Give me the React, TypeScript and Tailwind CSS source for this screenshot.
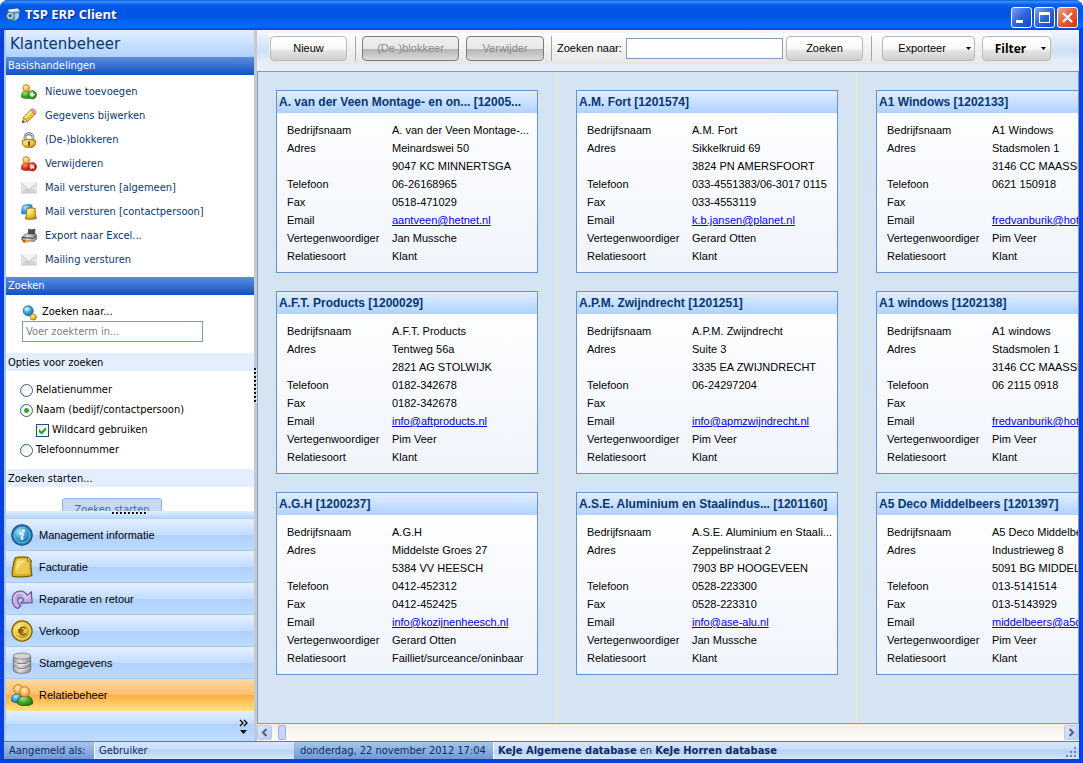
import React from 'react';

type IconProps = { className?: string };

const tahoma = "font-['DejaVu_Sans_Condensed','DejaVu_Sans',sans-serif]";
const sans = "font-['Liberation_Sans',Arial,sans-serif]";

/* ---------- icons ---------- */

const Defs = () => (
  <svg width="0" height="0" className="absolute" aria-hidden="true">
    <defs>
      <radialGradient id="gold" cx="0.35" cy="0.3" r="0.8">
        <stop offset="0" stopColor="#fff0a0" />
        <stop offset="0.5" stopColor="#eec93c" />
        <stop offset="1" stopColor="#b08412" />
      </radialGradient>
      <radialGradient id="blue" cx="0.35" cy="0.3" r="0.8">
        <stop offset="0" stopColor="#b3e2fa" />
        <stop offset="0.5" stopColor="#3fa5dc" />
        <stop offset="1" stopColor="#14659f" />
      </radialGradient>
      <radialGradient id="green" cx="0.35" cy="0.3" r="0.8">
        <stop offset="0" stopColor="#a4e080" />
        <stop offset="0.5" stopColor="#44a62c" />
        <stop offset="1" stopColor="#1d7412" />
      </radialGradient>
      <radialGradient id="red" cx="0.35" cy="0.3" r="0.8">
        <stop offset="0" stopColor="#ff8c74" />
        <stop offset="0.5" stopColor="#dc3422" />
        <stop offset="1" stopColor="#9c1509" />
      </radialGradient>
      <radialGradient id="skin" cx="0.4" cy="0.35" r="0.75">
        <stop offset="0" stopColor="#fff0b8" />
        <stop offset="0.55" stopColor="#f7bd5c" />
        <stop offset="1" stopColor="#d8801c" />
      </radialGradient>
      <linearGradient id="steel" x1="0" x2="1" y1="0" y2="0">
        <stop offset="0" stopColor="#98989c" />
        <stop offset="0.4" stopColor="#dedee0" />
        <stop offset="1" stopColor="#858589" />
      </linearGradient>
      <linearGradient id="violet" x1="0" x2="1" y1="0" y2="1">
        <stop offset="0" stopColor="#9c84c4" />
        <stop offset="0.5" stopColor="#cdbbe6" />
        <stop offset="1" stopColor="#a58acb" />
      </linearGradient>
    </defs>
  </svg>
);

const Svg16 = ({ children, className = '' }: { children: React.ReactNode; className?: string }) => (
  <svg viewBox="0 0 16 16" className={`size-4 shrink-0 ${className}`} aria-hidden="true">{children}</svg>
);
const Svg22 = ({ children }: { children: React.ReactNode }) => (
  <svg viewBox="0 0 22 22" className="size-[22px] shrink-0" aria-hidden="true">{children}</svg>
);

const UserAddIcon = () => (
  <Svg16>
    <path d="M.3 13C0 9 2 6.800 5.400 6.700S11 8.800 10.800 13.300C7.500 15.200 3 15 .3 13z" fill="url(#green)" stroke="#2d7d1c" strokeWidth=".6" />
    <circle cx="5.200" cy="4" r="3.400" fill="url(#skin)" stroke="#cf7f1e" strokeWidth=".8" />
    <circle cx="11.300" cy="10.800" r="4.200" fill="url(#green)" stroke="#1e7a18" strokeWidth=".7" />
    <path d="M11.300 8.600v4.400M9.100 10.800h4.400" stroke="#fff" strokeWidth="1.400" />
  </Svg16>
);
const UserRemoveIcon = () => (
  <Svg16>
    <path d="M.3 13C0 9 2 6.800 5.400 6.700S11 8.800 10.800 13.300C7.500 15.200 3 15 .3 13z" fill="url(#red)" stroke="#a02010" strokeWidth=".6" />
    <circle cx="5.200" cy="4" r="3.400" fill="url(#skin)" stroke="#cf7f1e" strokeWidth=".8" />
    <circle cx="11.300" cy="10.800" r="4.200" fill="url(#red)" stroke="#a01c10" strokeWidth=".7" />
    <path d="M9.700 9.200l3.200 3.200M12.900 9.200l-3.200 3.200" stroke="#fff" strokeWidth="1.500" />
  </Svg16>
);
const PencilIcon = () => (
  <Svg16>
    <path d="M1.400 14.600L2.500 9.500l4.200 4z" fill="#f3dcb0" stroke="#8b6214" strokeWidth=".6" />
    <path d="M1.100 14.900l.7-2.700 2 1.900z" fill="#333" />
    <path d="M2.300 9.600L9.600 2l4.600 4.200-7.500 7.500z" fill="#f0c030" stroke="#94690c" strokeWidth=".8" />
    <path d="M3.800 10.200L10.600 3.300" stroke="#fff2a4" strokeWidth="1.800" />
    <path d="M9.600 2l1.200-1c1.400-1 5 2.200 4.200 3.800l-.8 1.400z" fill="#e3a0cd" stroke="#8f5a7c" strokeWidth=".6" />
  </Svg16>
);
const LockIcon = () => (
  <Svg16>
    <path d="M4 8V5.500c0-5 8-5 8 0V8" fill="none" stroke="#77777a" strokeWidth="2.800" />
    <path d="M4 8V5.500c0-5 8-5 8 0V8" fill="none" stroke="#d4d4d8" strokeWidth="1.200" />
    <path d="M1.200 8.800C4 7 12 7 14.800 8.800c.2 5.200-2.300 6.800-6.800 6.800S1 14 1.200 8.800z" fill="url(#gold)" stroke="#8f6408" strokeWidth=".8" />
    <path d="M8 9.300a1.300 1.300 0 0 1 .6 2.400l.4 2H7l.4-2A1.300 1.300 0 0 1 8 9.300z" fill="#5a3d04" />
  </Svg16>
);
const MailIcon = () => (
  <Svg16>
    <rect y="2.500" width="16" height="11" fill="#e2e2e2" />
    <path d="M0 13.500L6 8h4l6 5.500z" fill="#cfcfcf" />
    <path d="M0 2.500h16L8 9.500z" fill="#f3f3f3" />
    <path d="M0 2.500l8 7 8-7" fill="none" stroke="#c3c3c3" strokeWidth=".7" />
  </Svg16>
);
const ContactMailIcon = () => (
  <Svg16>
    <path d="M2.500 1.200C5 .3 9 .3 11 1l.4 8-9 1-1.900-.6C.8 6 .8 3 2.500 1.200z" fill="url(#blue)" stroke="#2f8fc4" strokeWidth=".8" />
    <path d="M6.200 4.500c2.600-.7 5.600-.6 8-.1-.3 3 .4 5.600.6 8.200l.8 2c-3.600 1-8 .9-11.400.1 1.700-3.400.800-6.700 2-10.200z" fill="url(#gold)" stroke="#9a700b" strokeWidth=".9" />
    <path d="M7.200 5.800c2-.4 3.800-.4 5.600-.1" stroke="#fff6c0" fill="none" />
  </Svg16>
);
const PrinterIcon = () => (
  <Svg16>
    <path d="M6.800 7L7.600 1l3 .8L14 1l-.2 6.500z" fill="#4c4c50" stroke="#303034" strokeWidth=".5" />
    <path d="M.8 9.500L4.500 6h9.800l1.200 1.400v3.800l-2.700 2.300L1 12z" fill="url(#steel)" stroke="#55555a" strokeWidth=".7" />
    <path d="M.8 9.500l11.400.8 3.200-2.800" fill="none" stroke="#3d3d42" strokeWidth="1" />
    <path d="M2 11.400l6 .8-1.500 2.600-4.500-.6z" fill="#f0a325" />
    <path d="M1.800 11.800l2.700.4-.9 2.200-1.800-.3z" fill="#c9382b" />
  </Svg16>
);
const SearchIcon = () => (
  <Svg16 className="mt-0.5">
    <path d="M8.800 9.500l2 2" stroke="#7a5a10" strokeWidth="2" />
    <circle cx="6.200" cy="5.800" r="5" fill="url(#blue)" stroke="#1d6ea6" strokeWidth=".9" />
    <ellipse cx="5" cy="4.100" rx="2.400" ry="1.600" fill="#e3f6ff" opacity=".7" />
    <circle cx="11.300" cy="12" r="3.100" fill="url(#gold)" stroke="#a5780c" strokeWidth=".7" />
  </Svg16>
);
const AppIcon = () => (
  <Svg16>
    <path d="M2.500 2.500L12.500 1l2.700 2.500-1.200 8-4 3-7-1.500z" fill="#5b9cbc" stroke="#1a4a70" strokeWidth=".6" />
    <path d="M2.800 2.800L12.400 1.500l2.300 2.200-9.800 1.600z" fill="#e4f6fa" />
    <path d="M10 7l4-.8-.6 4.600-3 2.500z" fill="#a8d3e4" />
    <circle cx="5.300" cy="8.800" r="3.800" fill="#c6d6dc" stroke="#2a5675" strokeWidth=".7" />
    <circle cx="5.200" cy="8.800" r="1.800" fill="#2d6a94" />
  </Svg16>
);

const InfoIcon = () => (
  <Svg22>
    <circle cx="11" cy="11" r="10.200" fill="#2a80b8" stroke="#164f7a" strokeWidth="1.100" />
    <circle cx="11" cy="11" r="7.800" fill="url(#blue)" stroke="#7cc0e6" strokeWidth=".9" />
    <circle cx="12.600" cy="6.800" r="1.500" fill="#fff" />
    <path d="M8.600 10.200c1.600-1 3.700-1.300 3.300.4l-1.300 3.900c-.2.900.9.500 1.700-.3" fill="none" stroke="#fff" strokeWidth="1.700" />
  </Svg22>
);
const InvoiceIcon = () => (
  <Svg22>
    <path d="M4.300 1.800C8 .8 12.500.8 16.800 1.300l3.400 3.400c-1 4.600.4 9 .6 15-5.800 1.600-13 1.400-19.300.7C.6 17 2.200 7 4.300 1.800z" fill="#d9ae24" stroke="#806008" strokeWidth="1.300" strokeLinejoin="round" />
    <path d="M5.600 3.500c3.200-.6 6.400-.6 10-.3l2.400 2.600c-.6 4 .2 7.500.3 11.700-4 .8-10 .7-14.700.2.100-4.700.6-9.700 2-14.200z" fill="#ecc94a" />
    <path d="M6.200 5c3-.6 5.500-.5 8.300-.3C11 7 7.500 11 4.900 15.500c-.1-3.500.4-7.300 1.300-10.500z" fill="#f8e590" opacity=".8" />
    <path d="M16.800 1.300l-.5 4.100 3.900-.7z" fill="#fff2b0" stroke="#806008" strokeWidth=".8" />
  </Svg22>
);
const ReturnIcon = () => (
  <Svg22>
    <path d="M6.800 20.500C-1 18 -.8 3.200 9 3c3.600 0 6 1.800 7.300 4.600l4-3.900.9 11-11.400.5 3-3.100c-1.400-3-5.600-3.400-6-.1-.3 2.600 1.200 4.400 3 5.700z" fill="url(#violet)" stroke="#6c4f96" strokeWidth="1.200" strokeLinejoin="round" />
    <path d="M3.200 14C2 8.500 4.800 4.900 9 4.800c3.200 0 5.400 2 6.800 5l3.400-3.200" fill="none" stroke="#e9dff6" strokeWidth="1.100" />
  </Svg22>
);
const EuroIcon = () => (
  <Svg22>
    <circle cx="11" cy="11" r="10.200" fill="#dfb02a" stroke="#7d5906" strokeWidth="1.100" />
    <circle cx="11" cy="11" r="8" fill="url(#gold)" stroke="#f8e58c" strokeWidth="1.100" />
    <path d="M14.800 8.400c-2.300-2-6-1.300-6 2.600s3.700 4.600 6 2.600M7 10.100h5.500M7 12h5.500" fill="none" stroke="#7a5608" strokeWidth="1.600" />
  </Svg22>
);
const DatabaseIcon = () => (
  <Svg22>
    <path d="M2.300 4v14c0 4.400 17.400 4.400 17.400 0V4z" fill="url(#steel)" stroke="#75757a" strokeWidth=".9" />
    <ellipse cx="11" cy="4" rx="8.700" ry="3" fill="#d3d3d6" stroke="#85858a" strokeWidth=".9" />
    <path d="M2.300 8.700c0 4.200 17.400 4.200 17.400 0M2.300 13.500c0 4.200 17.400 4.200 17.400 0" fill="none" stroke="#6e6e73" strokeWidth="1.300" />
    <path d="M3 10.200c1.600 3.200 14.400 3.200 16 0M3 15c1.600 3.200 14.400 3.200 16 0" fill="none" stroke="#f2f2f4" strokeWidth=".9" />
  </Svg22>
);
const UsersIcon = () => (
  <Svg22>
    <path d="M.8 17.200C.4 12.300 2.600 9.700 6.500 9.700s6 2.800 5.600 7.600c-3.400 1.800-8 1.900-11.300-.1z" fill="url(#blue)" stroke="#155f94" strokeWidth=".9" />
    <circle cx="7.200" cy="5.200" r="4.600" fill="url(#skin)" stroke="#d07c18" />
    <path d="M6.600 19.800c-.5-5.400 2-8 7.300-8s8 2.900 7.600 8c-4.300 2.500-10.600 2.600-14.900 0z" fill="url(#green)" stroke="#1d6c12" />
    <circle cx="13.800" cy="7.800" r="5" fill="url(#skin)" stroke="#d07c18" />
  </Svg22>
);

const CaretDown = ({ className = '' }: IconProps) => (
  <svg viewBox="0 0 5 3" className={`h-[3px] w-[5px] shrink-0 ${className}`} aria-hidden="true"><path d="M0 0h5L2.500 3z" fill="#000" /></svg>
);

/* ---------- data ---------- */

const actions = [
  { label: 'Nieuwe toevoegen', Icon: UserAddIcon },
  { label: 'Gegevens bijwerken', Icon: PencilIcon },
  { label: '(De-)blokkeren', Icon: LockIcon },
  { label: 'Verwijderen', Icon: UserRemoveIcon },
  { label: 'Mail versturen [algemeen]', Icon: MailIcon },
  { label: 'Mail versturen [contactpersoon]', Icon: ContactMailIcon },
  { label: 'Export naar Excel...', Icon: PrinterIcon },
  { label: 'Mailing versturen', Icon: MailIcon },
];

const modules = [
  { label: 'Management informatie', Icon: InfoIcon },
  { label: 'Facturatie', Icon: InvoiceIcon },
  { label: 'Reparatie en retour', Icon: ReturnIcon },
  { label: 'Verkoop', Icon: EuroIcon },
  { label: 'Stamgegevens', Icon: DatabaseIcon },
  { label: 'Relatiebeheer', Icon: UsersIcon, active: true },
];

type Customer = {
  title: string; name: string; street: string; city: string;
  phone: string; fax: string; email: string; agent: string; kind: string;
};

const c = (title: string, name: string, street: string, city: string, phone: string, fax: string, email: string, agent: string, kind = 'Klant'): Customer =>
  ({ title, name, street, city, phone, fax, email, agent, kind });

const columns: Customer[][] = [
  [
    c('A. van der Veen Montage- en on... [12005...', 'A. van der Veen Montage-...', 'Meinardswei 50', '9047 KC MINNERTSGA', '06-26168965', '0518-471029', 'aantveen@hetnet.nl', 'Jan Mussche'),
    c('A.F.T. Products [1200029]', 'A.F.T. Products', 'Tentweg 56a', '2821 AG STOLWIJK', '0182-342678', '0182-342678', 'info@aftproducts.nl', 'Pim Veer'),
    c('A.G.H [1200237]', 'A.G.H', 'Middelste Groes 27', '5384 VV HEESCH', '0412-452312', '0412-452425', 'info@kozijnenheesch.nl', 'Gerard Otten', 'Failliet/surceance/oninbaar'),
  ],
  [
    c('A.M. Fort [1201574]', 'A.M. Fort', 'Sikkelkruid 69', '3824 PN AMERSFOORT', '033-4551383/06-3017 0115', '033-4553119', 'k.b.jansen@planet.nl', 'Gerard Otten'),
    c('A.P.M. Zwijndrecht [1201251]', 'A.P.M. Zwijndrecht', 'Suite 3', '3335 EA ZWIJNDRECHT', '06-24297204', '', 'info@apmzwijndrecht.nl', 'Pim Veer'),
    c('A.S.E. Aluminium en Staalindus... [1201160]', 'A.S.E. Aluminium en Staali...', 'Zeppelinstraat 2', '7903 BP HOOGEVEEN', '0528-223300', '0528-223310', 'info@ase-alu.nl', 'Jan Mussche'),
  ],
  [
    c('A1 Windows [1202133]', 'A1 Windows', 'Stadsmolen 1', '3146 CC MAASSLUIS', '0621 150918', '', 'fredvanburik@hotmail.com', 'Pim Veer'),
    c('A1 windows [1202138]', 'A1 windows', 'Stadsmolen 1', '3146 CC MAASSLUIS', '06 2115 0918', '', 'fredvanburik@hotmail.com', 'Pim Veer'),
    c('A5 Deco Middelbeers [1201397]', 'A5 Deco Middelbeers', 'Industrieweg 8', '5091 BG MIDDELBEERS', '013-5141514', '013-5143929', 'middelbeers@a5deco.nl', 'Pim Veer'),
  ],
];

/* ---------- parts ---------- */

const Row = ({ label, children }: { label: string; children?: React.ReactNode }) => (
  <div className="flex h-[18px] whitespace-nowrap">
    <dt className="w-[105px] shrink-0">{label}</dt>
    <dd>{children}</dd>
  </div>
);

const Card = ({ item }: { item: Customer }) => (
  <article className="border border-[#6593cf] bg-linear-to-b from-white to-[#f0f4fb]">
    <h3 className="h-[22px] bg-linear-to-b from-[#e3efff] to-[#afd2ff] pl-0.5 text-[12px] leading-[22px] font-bold whitespace-nowrap text-[#083772]">{item.title}</h3>
    <dl className="pt-2 pb-[7px] pl-2.5 text-[11px] leading-[18px] text-black">
      <Row label="Bedrijfsnaam">{item.name}</Row>
      <Row label="Adres">{item.street}</Row>
      <Row label="">{item.city}</Row>
      <Row label="Telefoon">{item.phone}</Row>
      <Row label="Fax">{item.fax}</Row>
      <Row label="Email"><a href={`mailto:${item.email}`} className="text-[#0000f0] underline">{item.email}</a></Row>
      <Row label="Vertegenwoordiger">{item.agent}</Row>
      <Row label="Relatiesoort">{item.kind}</Row>
    </dl>
  </article>
);

const toolButton = 'flex h-[25px] shrink-0 items-center justify-center rounded-[4px] border border-[#b8b8b8] bg-[linear-gradient(#ffffff_0%,#fafafa_50%,#e4e4e4_60%,#cfcfcf_100%)]';
const disabledButton = 'flex h-[25px] shrink-0 items-center justify-center rounded-[4px] border border-[#7c7c7c] bg-[linear-gradient(#efefef_0%,#e8e8e8_50%,#b4b4b4_51%,#dcdcdc_100%)] text-[#8a8a8a]';

const ToolSeparator = () => <div className="h-[25px] w-px shrink-0 bg-[#a7a69a]" />;

const radioClass = 'size-[13px] shrink-0 appearance-none rounded-full border border-[#33628f] bg-[linear-gradient(135deg,#e6e6e2,#ffffff_60%)] checked:bg-[radial-gradient(circle,#2fa52f_0_2px,#ffffff_3px,#f4f4f1_100%)]';

const SectionHeader = ({ children }: { children: React.ReactNode }) => (
  <h2 className="h-[18px] bg-linear-to-b from-[#5b8ddb] to-[#0d50c8] pl-0.5 leading-[18px] text-white">{children}</h2>
);
const SubHeader = ({ children }: { children: React.ReactNode }) => (
  <h3 className="h-[18px] bg-[#e3efff] pl-0.5 leading-[19px] text-black">{children}</h3>
);

const Sidebar = () => {
  return (
    <aside className={`flex w-[250px] shrink-0 flex-col border-l-2 border-[#a9c9f7] text-[11px] ${tahoma}`}>
      <h1 className="h-[27px] shrink-0 bg-linear-to-b from-[#e3efff] to-[#afd2ff] pl-1 text-[15px] leading-[29px] text-[#083772] font-['DejaVu_Sans',sans-serif]">Klantenbeheer</h1>
      <div className="min-h-0 flex-1 overflow-hidden bg-white">
        <SectionHeader>Basishandelingen</SectionHeader>
        <ul className="pt-[5px] pb-[5px]">
          {actions.map(({ label, Icon }, i) => (
            <li key={i} className="h-6">
              <button className="flex h-6 items-center gap-2 pl-[15px] text-[#083772]"><Icon /><span className="pt-px">{label}</span></button>
            </li>
          ))}
        </ul>
        <SectionHeader>Zoeken</SectionHeader>
        <div className="pt-2 pb-[11px] pl-4">
          <label htmlFor="term" className="flex h-[18px] items-center gap-1"><SearchIcon />Zoeken naar...</label>
          <input id="term" placeholder="Voer zoekterm in..." className="block h-[21px] w-[181px] border border-[#7f9db9] px-[3px] placeholder:text-[#808080]" />
        </div>
        <SubHeader>Opties voor zoeken</SubHeader>
        <div className="flex flex-col pt-[9px] pb-[9px] pl-3.5">
          <label className="flex h-5 items-center gap-[3px]"><input type="radio" name="mode" className={radioClass} /><span className="pt-px">Relatienummer</span></label>
          <label className="flex h-5 items-center gap-[3px]"><input type="radio" name="mode" defaultChecked className={radioClass} /><span className="pt-px">Naam (bedijf/contactpersoon)</span></label>
          <label className="flex h-5 items-center gap-[3px] pl-4">
            <span className="grid">
              <input type="checkbox" defaultChecked className="peer col-start-1 row-start-1 size-[13px] appearance-none border border-[#1c5180] bg-[linear-gradient(135deg,#e6e6e2,#ffffff_60%)]" />
              <svg viewBox="0 0 13 13" className="pointer-events-none invisible col-start-1 row-start-1 size-[13px] peer-checked:visible" aria-hidden="true"><path d="M3 5v3l2.500 2.500L10 6V3L5.500 7.500z" fill="#21a121" /></svg>
            </span>
            <span className="pt-px">Wildcard gebruiken</span>
          </label>
          <label className="flex h-5 items-center gap-[3px]"><input type="radio" name="mode" className={radioClass} /><span className="pt-px">Telefoonnummer</span></label>
        </div>
        <SubHeader>Zoeken starten...</SubHeader>
        <div className="pt-[11px] pl-14">
          <button className="h-[25px] w-[100px] rounded-[3px] border border-[#8db2e3] bg-[#c5d9f1] text-[#3f6aa5]">Zoeken starten</button>
        </div>
      </div>
      <div className="flex h-2 shrink-0 items-start justify-center bg-linear-to-b from-[#e3efff] to-[#afd2ff]">
        <svg viewBox="0 0 36 4" className="h-1 w-9" aria-hidden="true">
          {Array.from({ length: 9 }, (_, i) => (
            <g key={i}><rect x={i * 4 + 1} y="2" width="2" height="2" fill="#fff" /><rect x={i * 4} y="1" width="2" height="2" fill="#111" /></g>
          ))}
        </svg>
      </div>
      <nav className={`shrink-0 ${sans}`}>
        {modules.map(({ label, Icon, active }) => (
          <button
            key={label}
            className={`flex h-8 w-full items-center gap-1.5 border-b pl-[5px] ${
              active
                ? 'border-[#ffe08a] bg-[linear-gradient(#ffd9a0_0%,#ffbe70_50%,#ffab3f_51%,#ffe07b_100%)]'
                : 'border-[#a5c7f3] bg-[linear-gradient(#e3efff_0%,#c4ddff_50%,#add1ff_51%,#c0dbff_100%)]'
            }`}
          >
            <Icon /><span className="pt-px">{label}</span>
          </button>
        ))}
      </nav>
      <div className="flex h-[30px] shrink-0 items-center justify-end bg-[linear-gradient(#e3efff_0%,#c4ddff_42%,#add1ff_43%,#c0dbff_100%)] pr-1.5">
        <button aria-label="Meer modules">
          <svg viewBox="0 0 9 15" className="h-[15px] w-[9px]" aria-hidden="true">
            <path d="M1 1l3 3-3 3M5 1l3 3-3 3" fill="none" stroke="#000" strokeWidth="1.300" />
            <path d="M1 11h7l-3.500 4z" fill="#000" />
          </svg>
        </button>
      </div>
    </aside>
  );
};

const Toolbar = () => (
  <div className="flex h-[42px] shrink-0 border-b border-[#7f9db9] bg-[linear-gradient(#f4f8fe_0%,#cfdff4_50%,#e3ecf8_75%,#eaf1fb_100%)] pr-7 pl-3">
    <div className="mt-[3px] flex h-[31px] flex-1 items-center bg-linear-to-b from-white to-[#e6e6e6] pl-px">
      <button className={`${toolButton} w-[77px]`}>Nieuw</button>
      <div className="flex items-center gap-1.5 pl-2">
        <ToolSeparator />
        <button disabled className={`${disabledButton} w-[97px]`}>(De-)blokkeer</button>
        <button disabled className={`${disabledButton} ml-px w-[78px]`}>Verwijder</button>
      </div>
      <div className="flex items-center gap-[3px] pl-[7px]">
        <ToolSeparator />
        <label htmlFor="find" className="w-[68px] pl-0.5 whitespace-nowrap">Zoeken naar:</label>
        <input id="find" className="h-[21px] w-[157px] border border-[#7f9db9] bg-white px-1" />
        <button className={`${toolButton} w-[77px]`}>Zoeken</button>
      </div>
      <div className="flex items-center pl-2">
        <ToolSeparator />
        <button className={`${toolButton} ml-2.5 w-[93px] gap-5 pl-3`}>Exporteer<CaretDown /></button>
        <button className={`${toolButton} ml-[7px] w-[69px] gap-[15px] pl-2 text-[12px] font-bold font-['Open_Sans',sans-serif]`}>Filter<CaretDown /></button>
      </div>
    </div>
  </div>
);

const scrollBtn = 'flex h-[15px] w-[15px] shrink-0 items-center justify-center rounded-[2px] border border-[#b8c9f0] bg-linear-to-br from-[#dfe9ff] to-[#b9cbf6]';

const App = () => (
  <div className="h-screen bg-white text-black">
    <Defs />
    <div className="flex h-full flex-col overflow-hidden rounded-t-[8px] bg-[#0a3fe0]">
      <header className="flex h-[30px] shrink-0 items-center bg-[linear-gradient(#0a5ee0_0%,#3b8ffb_6%,#0a62ec_14%,#0054e3_30%,#0055e6_55%,#0468fb_80%,#0366fa_90%,#0042cf_100%)] pr-[5px] pl-[5px]">
        <AppIcon />
        <span className="flex-1 pl-1 text-[13px] font-bold text-white font-['Open_Sans','Noto_Sans',sans-serif] [text-shadow:1px_1px_0_#0a2a8c]">TSP ERP Client</span>
        <div className="flex gap-0.5 pt-1">
          <button aria-label="Minimaliseren" className="flex size-[21px] rounded-[3px] border border-white bg-linear-to-br from-[#7ea3f5] via-[#2f63e0] to-[#1644cf]">
            <svg viewBox="0 0 19 19" aria-hidden="true"><path d="M4 12h7v3H4z" fill="#fff" /></svg>
          </button>
          <button aria-label="Maximaliseren" className="flex size-[21px] rounded-[3px] border border-white bg-linear-to-br from-[#7ea3f5] via-[#2f63e0] to-[#1644cf]">
            <svg viewBox="0 0 19 19" aria-hidden="true"><path d="M4 4h11v11H4zM5 7v7h9V7z" fill="#fff" fillRule="evenodd" /></svg>
          </button>
          <button aria-label="Sluiten" className="flex size-[21px] rounded-[3px] border border-white bg-linear-to-br from-[#f0a088] via-[#e0603c] to-[#cf3210]">
            <svg viewBox="0 0 19 19" aria-hidden="true"><path d="M5 5l9 9M14 5l-9 9" stroke="#fff" strokeWidth="2.200" /></svg>
          </button>
        </div>
      </header>

      <div className="flex min-h-0 flex-1 flex-col border-x-4 border-b-4 border-[#0a3fe0] bg-[#d5e4f2]">
        <div className="flex min-h-0 flex-1">
          <Sidebar />
          <div className="flex w-[3px] shrink-0 items-center bg-[#c6c9ce]">
            <svg viewBox="0 0 3 36" className="h-9 w-[3px]" aria-hidden="true">
              {Array.from({ length: 9 }, (_, i) => (
                <g key={i}><rect x="1" y={i * 4 + 1} width="2" height="2" fill="#fff" /><rect x="0" y={i * 4} width="2" height="2" fill="#111" /></g>
              ))}
            </svg>
          </div>
          <main className={`flex min-w-0 flex-1 flex-col text-[11px] ${sans}`}>
            <Toolbar />
            <div className="flex min-h-0 flex-1 overflow-hidden border-x border-[#7f9db9]">
              {columns.map((items, i) => (
                <section key={i} className="flex w-[300px] shrink-0 flex-col gap-[18px] border-r-2 border-[#e6e6da] px-[18px] pt-[18px] last:border-transparent">
                  {items.map((item) => <Card key={item.title} item={item} />)}
                </section>
              ))}
            </div>
            <div className="flex h-[18px] shrink-0 items-center border-t border-[#7f9db9] bg-linear-to-b from-[#f1efe8] to-[#fefefb]">
              <button aria-label="Naar links" className={scrollBtn}>
                <svg viewBox="0 0 7 9" className="h-[9px] w-[7px]" aria-hidden="true"><path d="M5.500 1L2 4.500 5.500 8" fill="none" stroke="#4d6185" strokeWidth="2" /></svg>
              </button>
              <div className="flex flex-1 pl-1.5"><div className="h-[15px] w-2 rounded-[2px] border border-[#98b0e6] bg-[#c8d6fb]" /></div>
              <button aria-label="Naar rechts" className={scrollBtn}>
                <svg viewBox="0 0 7 9" className="h-[9px] w-[7px]" aria-hidden="true"><path d="M1.500 1L5 4.500 1.500 8" fill="none" stroke="#4d6185" strokeWidth="2" /></svg>
              </button>
            </div>
          </main>
        </div>
        <footer className={`flex h-[18px] shrink-0 border-t border-[#567db0] bg-[linear-gradient(#d7e6f9_0%,#c7dcf8_45%,#b3d0f5_46%,#d7e5f7_100%)] text-[11px] leading-[17px] whitespace-nowrap text-[#0b2a6b] ${tahoma}`}>
          <div className="w-[90px] bg-[linear-gradient(#a8c5ec,#7099cf)] pl-[5px]">Aangemeld als:</div>
          <div className="w-[200px] border-l border-white pl-1">Gebruiker</div>
          <div className="w-[199px] bg-[linear-gradient(#a8c5ec,#7099cf)] pl-1.5">donderdag, 22 november 2012 17:04</div>
          <div className="min-w-0 flex-1 border-l border-white pl-1"><b>KeJe Algemene database</b> en <b>KeJe Horren database</b></div>
          <svg viewBox="0 0 12 12" className="mt-1 mr-0.5 size-3 shrink-0" aria-hidden="true">
            <path d="M9 1h2v2H9zM5 5h2v2H5zM9 5h2v2H9zM1 9h2v2H1zM5 9h2v2H5zM9 9h2v2H9z" fill="#5c86bf" />
          </svg>
        </footer>
      </div>
    </div>
  </div>
);

export default App;
